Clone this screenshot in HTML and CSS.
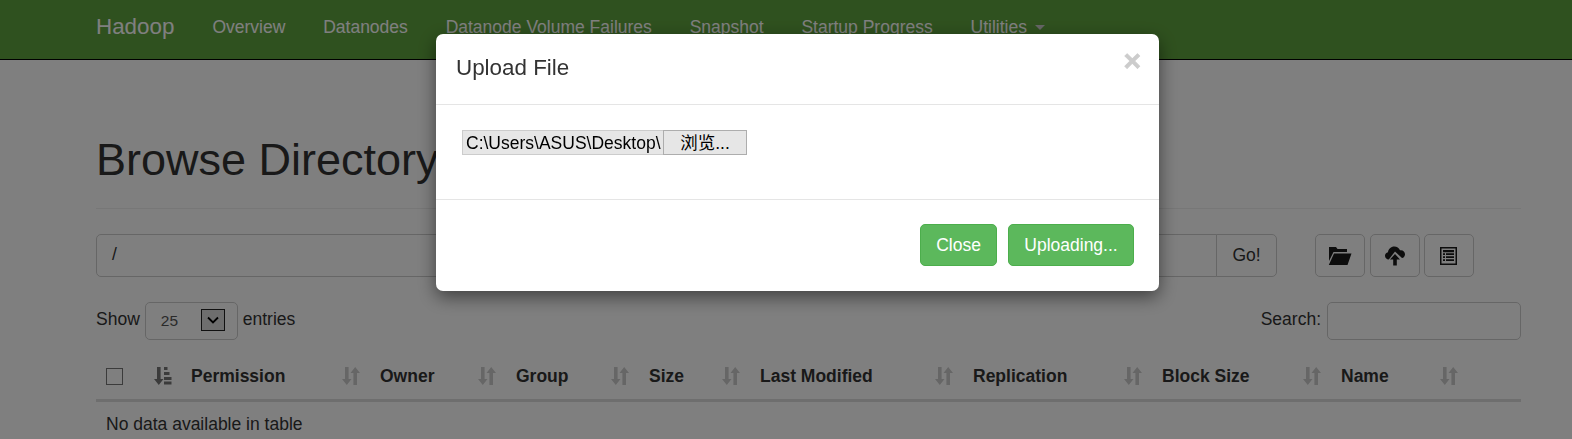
FILE: index.html
```html
<!DOCTYPE html>
<html lang="en">
<head>
<meta charset="UTF-8">
<meta name="viewport" content="width=device-width, initial-scale=1.0">
<title>Browsing HDFS</title>
<link rel="stylesheet" href="styles.css">
</head>
<body>
<svg class="defs" width="0" height="0">
  <symbol id="sort" viewBox="0 0 18 18">
    <path d="M3 0h3.600v12H9.500L4.800 18 0 12h3z"/>
    <path d="M11.400 18V6H8.500L13.200 0 18 6h-3v12z"/>
  </symbol>
  <symbol id="sort-attr" viewBox="0 0 18 18">
    <path d="M3 0h3.600v12H9.500L4.800 18 0 12h3z"/>
    <path d="M10 0h3.500v3H10zM10 5h5.500v3H10zM10 10h7.500v3H10zM10 14.500h7.500v3H10z"/>
  </symbol>
</svg>

<nav class="navbar">
  <a class="brand" href="#">Hadoop</a>
  <ul class="nav-list">
    <li><a href="#">Overview</a></li>
    <li><a href="#">Datanodes</a></li>
    <li><a href="#">Datanode Volume Failures</a></li>
    <li><a href="#">Snapshot</a></li>
    <li><a href="#">Startup Progress</a></li>
    <li><a href="#">Utilities <span class="caret"></span></a></li>
  </ul>
</nav>

<div class="container">
  <h1 class="page-header">Browse Directory</h1>

  <div class="path-row">
    <div class="input-group">
      <div class="path-input">/</div>
      <button class="btn go-btn">Go!</button>
    </div>
    <div class="tools">
      <button class="btn icon-btn" title="Create Directory">
        <svg width="24" height="18" viewBox="0 0 24 18"><path d="M1 3.500V0h7l1.500 2H19v3H5.500L1 14zM6 6.500h17.500L19.500 18H.8z" fill="#1a1a1a"/></svg>
      </button>
      <button class="btn icon-btn" title="Upload Files">
        <svg width="20" height="20" viewBox="0 0 20 20"><path d="M10 19.500H8.200v-6H5l5-5.500 5 5.500h-3.200v6zM3.800 13.500C1.500 13.500 0 11.800 0 9.800 0 8 1.200 6.500 3 6.200 3.300 3 6 .5 9.300.5c2.600 0 4.800 1.500 5.700 3.800.400-.1.700-.1 1-.1 2.200 0 4 1.700 4 4 0 1.900-1.200 3.500-3 3.900L10 5.500 3.800 13.500z" fill="#1a1a1a"/></svg>
      </button>
      <button class="btn icon-btn" title="Cut and Paste">
        <svg width="18" height="18" viewBox="0 0 18 18"><path fill-rule="evenodd" d="M0 0h17v18H0zM1.500 1.500v15h14v-15zM3 3h11v2.200H3zM3 6.300h2v1.800H3zM6 6.300h8v1.800H6zM3 9.200h2V11H3zM6 9.200h8V11H6zM3 12.200h2V14H3zM6 12.200h8V14H6z" fill="#1a1a1a"/></svg>
      </button>
    </div>
  </div>

  <div class="table-controls">
    <div class="length">
      <span class="ctl-label">Show</span>
      <div class="fake-select">
        <span class="select-value">25</span>
        <span class="select-arrow"><svg width="12" height="8" viewBox="0 0 12 8"><path d="M1 1.500l5 5 5-5" fill="none" stroke="#000" stroke-width="1.800"/></svg></span>
      </div>
      <span class="ctl-label">entries</span>
    </div>
    <div class="search">
      <span class="ctl-label">Search:</span>
      <div class="search-input"></div>
    </div>
  </div>

  <table class="file-table">
    <colgroup>
      <col class="col-check">
      <col class="col-order">
      <col class="col-perm">
      <col class="col-owner">
      <col class="col-group">
      <col class="col-size">
      <col class="col-mod">
      <col class="col-repl">
      <col class="col-block">
      <col class="col-name">
      <col>
    </colgroup>
    <thead>
      <tr>
        <th><span class="checkbox"></span></th>
        <th class="order-cell"><svg class="sort-icon strong"><use href="#sort-attr"/></svg></th>
        <th><div class="th-in">Permission<svg class="sort-icon"><use href="#sort"/></svg></div></th>
        <th><div class="th-in">Owner<svg class="sort-icon"><use href="#sort"/></svg></div></th>
        <th><div class="th-in">Group<svg class="sort-icon"><use href="#sort"/></svg></div></th>
        <th><div class="th-in">Size<svg class="sort-icon"><use href="#sort"/></svg></div></th>
        <th><div class="th-in">Last Modified<svg class="sort-icon"><use href="#sort"/></svg></div></th>
        <th><div class="th-in">Replication<svg class="sort-icon"><use href="#sort"/></svg></div></th>
        <th><div class="th-in">Block Size<svg class="sort-icon"><use href="#sort"/></svg></div></th>
        <th><div class="th-in">Name<svg class="sort-icon"><use href="#sort"/></svg></div></th>
        <th></th>
      </tr>
    </thead>
    <tbody>
      <tr><td colspan="11">No data available in table</td></tr>
    </tbody>
  </table>
</div>

<div class="backdrop"></div>

<div class="modal">
  <div class="modal-header">
    <h4>Upload File</h4>
    <span class="close">&times;</span>
  </div>
  <div class="modal-body">
    <div class="file-field">
      <div class="file-name">C:\Users\ASUS\Desktop\</div>
      <div class="file-btn">浏览...</div>
    </div>
  </div>
  <div class="modal-footer">
    <button class="btn btn-success">Close</button>
    <button class="btn btn-success">Uploading...</button>
  </div>
</div>
</body>
</html>
```

FILE: styles.css
```css
* {
  box-sizing: border-box;
}

body {
  margin: 0;
  height: 439px;
  overflow: hidden;
  background: #fff;
  color: #333;
  font-family: "Liberation Sans", Arial, sans-serif;
  font-size: 17.5px;
}

.defs {
  position: absolute;
}

a {
  text-decoration: none;
  color: inherit;
}

.navbar {
  display: flex;
  align-items: center;
  height: 60px;
  padding: 0 0 5px 96px;
  background: #5fa33e;
  border-bottom: 1px solid #000;
  color: #fff;
}

.brand {
  font-size: 22.4px;
  margin-right: 38px;
}

.nav-list {
  display: flex;
  gap: 37.8px;
  margin: 0;
  padding: 0;
  list-style: none;
  font-size: 17.5px;
}

.caret {
  display: inline-block;
  width: 0;
  height: 0;
  margin-left: 3px;
  vertical-align: middle;
  border-top: 5px solid #ccc;
  border-left: 5px solid transparent;
  border-right: 5px solid transparent;
}

.container {
  padding: 0 51px 0 96px;
}

.page-header {
  margin: 75px 0 0;
  padding-bottom: 23px;
  border-bottom: 1px solid #eee;
  font-size: 45px;
  font-weight: 400;
  line-height: 50px;
}

.path-row {
  display: flex;
  margin-top: 25px;
}

.input-group {
  display: flex;
  width: 1181px;
  height: 43px;
}

.path-input {
  flex: 1;
  padding: 9px 15px;
  border: 1px solid #ccc;
  border-radius: 5px 0 0 5px;
}

.btn {
  padding: 0;
  border: 1px solid #ccc;
  border-radius: 5px;
  background: #fff;
  color: #333;
  font-family: inherit;
  font-size: 17.5px;
}

.go-btn {
  width: 61px;
  margin-left: -1px;
  border-radius: 0 5px 5px 0;
}

.tools {
  display: flex;
  gap: 4.7px;
  margin-left: 38px;
}

.icon-btn {
  display: flex;
  align-items: center;
  justify-content: center;
  width: 50px;
}

.table-controls {
  display: flex;
  justify-content: space-between;
  margin-top: 25px;
}

.length,
.search {
  display: flex;
  align-items: center;
  gap: 5px;
}

.search {
  gap: 6px;
}

.ctl-label {
  margin-bottom: 3px;
}

.fake-select {
  display: flex;
  align-items: center;
  justify-content: space-between;
  width: 93px;
  height: 38px;
  padding: 0 12px 0 15px;
  border: 1px solid #ccc;
  border-radius: 5px;
  font-size: 15.500px;
  color: #555;
}

.select-value {
  margin-bottom: 1px;
}

.select-arrow {
  display: flex;
  align-items: center;
  justify-content: center;
  width: 24px;
  height: 22px;
  margin-bottom: 2px;
  border: 1px solid #222;
  background: #ddd;
}

.search-input {
  width: 194px;
  height: 38px;
  border: 1px solid #ccc;
  border-radius: 5px;
}

.file-table {
  width: 100%;
  margin-top: 15px;
  table-layout: fixed;
  border-collapse: collapse;
}

.col-check { width: 49px; }
.col-order { width: 36px; }
.col-perm { width: 189px; }
.col-owner { width: 136px; }
.col-group { width: 133px; }
.col-size { width: 111px; }
.col-mod { width: 213px; }
.col-repl { width: 189px; }
.col-block { width: 179px; }
.col-name { width: 137px; }

.file-table th {
  height: 45px;
  padding: 0 0 1px 10px;
  border-bottom: 3px solid #ddd;
  text-align: left;
  font-size: 17.5px;
}

.file-table td {
  padding: 12px 10px;
}

.th-in {
  display: flex;
  align-items: center;
  justify-content: space-between;
  padding-right: 10px;
}

.checkbox {
  display: block;
  width: 17px;
  height: 17px;
  border: 1px solid #777;
  background: #fff;
}

.file-table .order-cell {
  padding-left: 9px;
}

.sort-icon {
  width: 18px;
  height: 18px;
  fill: #ccc;
}

.sort-icon.strong {
  display: block;
  fill: #777;
}

.backdrop {
  position: fixed;
  inset: 0;
  background: rgba(0, 0, 0, 0.5);
}

.modal {
  position: fixed;
  top: 34px;
  left: 436px;
  width: 723px;
  height: 257px;
  border-radius: 7px;
  background: #fff;
  box-shadow: 0 6px 18px rgba(0, 0, 0, 0.5);
}

.modal-header {
  display: flex;
  align-items: center;
  justify-content: space-between;
  height: 71px;
  padding: 0 18px 2px 20px;
  border-bottom: 1px solid #e5e5e5;
}

.modal-header h4 {
  margin: 0;
  font-size: 22.4px;
  font-weight: 400;
}

.close {
  margin-top: -14px;
  font-size: 30px;
  font-weight: 700;
  color: #ccc;
  -webkit-text-stroke: 0.7px #ccc;
}

.modal-body {
  height: 95px;
  padding: 25px 26px 0;
  border-bottom: 1px solid #e5e5e5;
}

.file-field {
  display: flex;
  color: #000;
  font-family: "Liberation Sans", "Noto Sans CJK SC", sans-serif;
}

.file-name {
  width: 201px;
  height: 25px;
  padding-left: 3px;
  overflow: hidden;
  white-space: nowrap;
  line-height: 25px;
  background: #e6e6e6;
  border: 1px solid #ccc;
  border-right: 0;
}

.file-btn {
  width: 84px;
  height: 25px;
  line-height: 24px;
  text-align: center;
  border: 1px solid #adadad;
  background: #e6e6e6;
}

.modal-footer {
  display: flex;
  justify-content: flex-end;
  gap: 11px;
  padding: 24px 25px 0;
}

.btn-success {
  height: 42px;
  background: #5cb85c;
  border-color: #4cae4c;
  color: #fff;
}

.btn-success:first-child {
  width: 77px;
}

.btn-success:last-child {
  width: 126px;
}
```
